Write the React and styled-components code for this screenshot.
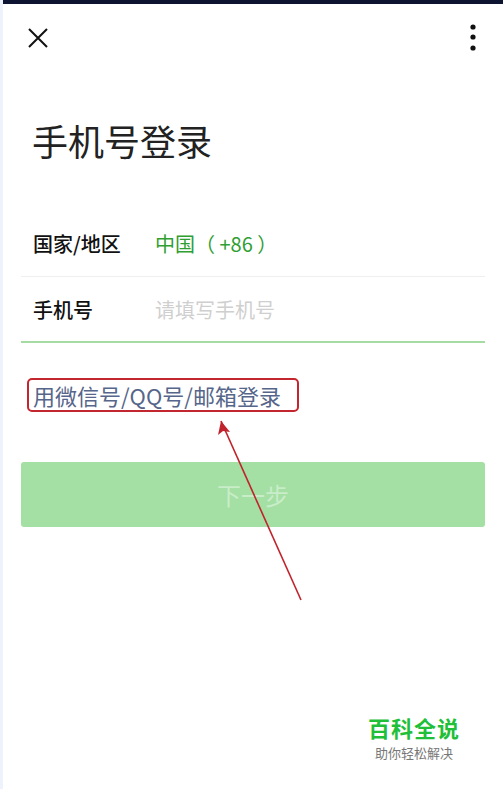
import React from 'react';
import styled, { createGlobalStyle } from 'styled-components';

const GlobalStyle = createGlobalStyle`
  html, body {
    margin: 0;
    padding: 0;
    background: #ffffff;
  }
  body {
    font-family: "Noto Sans CJK SC", "Noto Sans", sans-serif;
  }
`;

const Page = styled.div`
  position: relative;
  width: 503px;
  height: 789px;
  overflow: hidden;
  background: #ffffff;
  border-left: 3px solid #eef2fb;
  box-sizing: border-box;
`;

const StatusStrip = styled.div`
  height: 4px;
  background: #0c1431;
  margin-left: -3px;
`;

const Header = styled.div`
  display: flex;
  justify-content: space-between;
  align-items: center;
  height: 68px;
  padding: 0 27px 0 24px;
`;

const IconButton = styled.button`
  display: flex;
  align-items: center;
  justify-content: center;
  padding: 0;
  border: 0;
  background: none;
`;

const Content = styled.div`
  padding: 0 18px;
`;

const Title = styled.h1`
  margin: 43px 0 0 11px;
  font-size: 36px;
  font-weight: 400;
  line-height: 50px;
  color: #222222;
`;

const Form = styled.div`
  margin-top: 45px;
  border-bottom: 2px solid #a6dca3;
`;

const Row = styled.div`
  display: flex;
  align-items: center;
  height: ${p => (p.divided ? '66px' : '64px')};
  padding-left: 12px;
  border-bottom: ${p => (p.divided ? '1px solid #efefef' : 'none')};
`;

const Label = styled.span`
  width: 122px;
  font-size: 20px;
  font-weight: 500;
  color: #111111;
`;

const Value = styled.span`
  font-size: 20px;
  white-space: pre;
  color: ${p => (p.placeholder ? '#cfcfcf' : '#2f9e33')};
`;

const AltLogin = styled.div`
  display: inline-block;
  margin: 35px 0 0 6px;
  padding: 0 16px 0 4px;
  border: 2px solid #c3262e;
  border-radius: 5px;
  font-size: 22px;
  line-height: 30px;
  color: #56668a;
`;

const NextButton = styled.div`
  display: flex;
  align-items: center;
  justify-content: center;
  height: 65px;
  margin: 50px 0 0 0;
  width: 464px;
  border-radius: 3px;
  background: #a4dfa4;
  font-size: 24px;
  color: #c8edc8;
`;

const Arrow = styled.svg`
  position: absolute;
  left: 0;
  top: 0;
  pointer-events: none;
`;

const Badge = styled.div`
  position: absolute;
  left: 353px;
  top: 709px;
  width: 116px;
  padding: 2px 0 4px;
  display: flex;
  flex-direction: column;
  align-items: center;
  background: rgba(255, 255, 255, 0.9);
`;

const BadgeTitle = styled.div`
  font-size: 22px;
  font-weight: 700;
  letter-spacing: 1px;
  line-height: 32px;
  color: #1fbf3a;
`;

const BadgeSub = styled.div`
  font-size: 13px;
  line-height: 19px;
  color: #777777;
`;

export default function App() {
  return (
    <Page>
      <GlobalStyle />
      <StatusStrip />
      <Header>
        <IconButton>
          <svg width="22" height="22" viewBox="0 0 22 22">
            <path d="M2 2 L20 20 M20 2 L2 20" stroke="#111" strokeWidth="2" />
          </svg>
        </IconButton>
        <IconButton>
          <svg width="6" height="28" viewBox="0 0 6 28">
            <circle cx="3" cy="3" r="2.6" fill="#111" />
            <circle cx="3" cy="13" r="2.6" fill="#111" />
            <circle cx="3" cy="24" r="2.6" fill="#111" />
          </svg>
        </IconButton>
      </Header>
      <Content>
        <Title>手机号登录</Title>
        <Form>
          <Row divided>
            <Label>国家/地区</Label>
            <Value>中国（ +86 ）</Value>
          </Row>
          <Row>
            <Label>手机号</Label>
            <Value placeholder>请填写手机号</Value>
          </Row>
        </Form>
        <AltLogin>用微信号/QQ号/邮箱登录</AltLogin>
        <NextButton>下一步</NextButton>
      </Content>
      <Arrow width="503" height="789" viewBox="0 0 503 789">
        <path d="M298 600 L218 421" stroke="#c0232b" strokeWidth="1.6" fill="none" />
        <path d="M218 421 L215 435 L220 431 L227 432 Z" fill="#c0232b" />
      </Arrow>
      <Badge>
        <BadgeTitle>百科全说</BadgeTitle>
        <BadgeSub>助你轻松解决</BadgeSub>
      </Badge>
    </Page>
  );
}
